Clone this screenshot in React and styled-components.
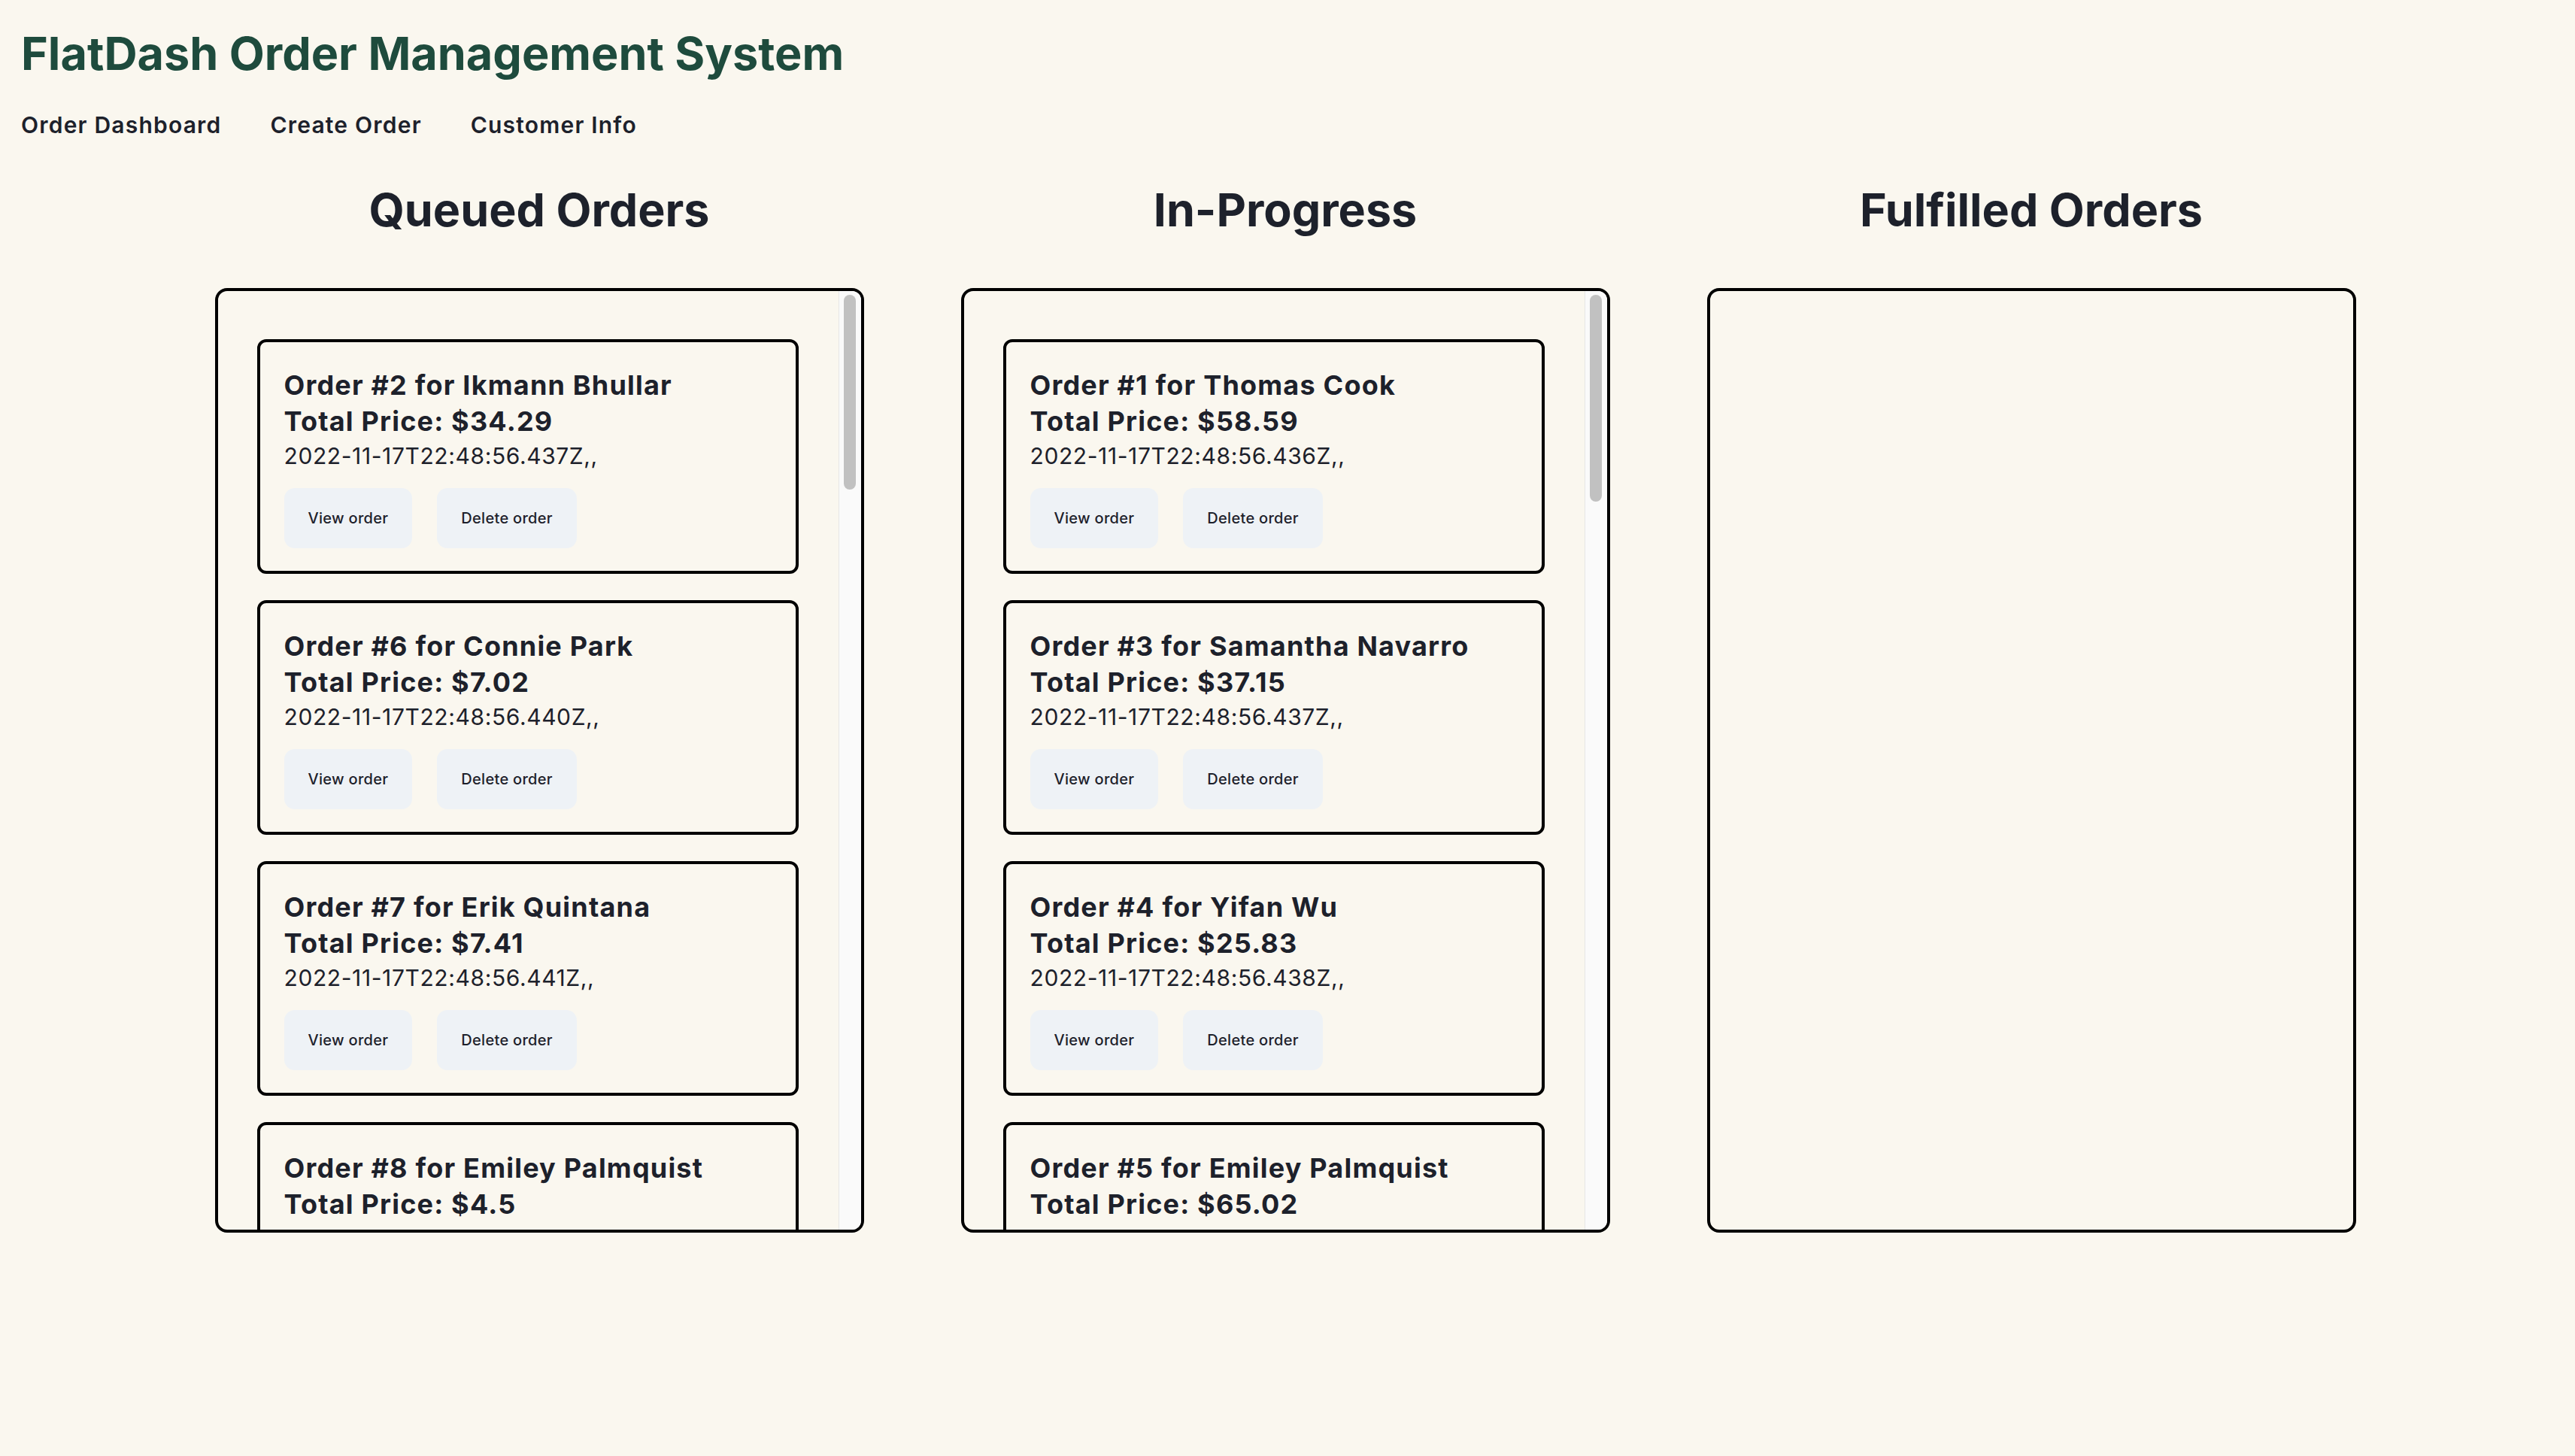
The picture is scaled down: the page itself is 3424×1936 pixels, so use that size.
import React from 'react'
import styled, { createGlobalStyle } from 'styled-components'

const GlobalStyle = createGlobalStyle`
    html, body {
        margin: 0;
        background: #faf7ef;
    }
    body {
        font-family: Inter, "Noto Sans", sans-serif;
        color: #1d212b;
    }
`

const Page = styled.div`
    padding: 34px 0 0 0;
`

const Header = styled.header`
    padding: 0 28px;
`

const Title = styled.h1`
    margin: 0;
    font-size: 61.1px;
    line-height: 74.4px;
    font-weight: 700;
    color: #1e4b3d;
`

const Nav = styled.nav`
    display: flex;
    gap: 65px;
    margin-top: 40px;
`

const NavLink = styled.a`
    font-size: 30px;
    line-height: 36px;
    font-weight: 600;
    letter-spacing: 1.2px;
    color: #1d212b;
    text-decoration: none;
    cursor: pointer;
`

const Board = styled.main`
    display: grid;
    grid-template-columns: repeat(3, 992px);
    margin: 58px 0 0 221px;
`

const Column = styled.section`
    display: flex;
    flex-direction: column;
    align-items: center;
`

const ColumnHeading = styled.h2`
    margin: 0;
    font-size: 61px;
    line-height: 74.4px;
    font-weight: 700;
    color: #1d212b;
`

const Panel = styled.div`
    box-sizing: border-box;
    width: 863px;
    height: 1256px;
    margin-top: 66px;
    border: 4px solid #000;
    border-radius: 16px;
    overflow: hidden;
    display: flex;
`

const CardList = styled.div`
    flex: 1;
    min-width: 0;
    overflow: hidden;
    display: flex;
    flex-direction: column;
    gap: 35px;
    padding: 64px 53px 35px 52px;
`

const ScrollTrack = styled.div`
    box-sizing: border-box;
    flex: none;
    width: 30px;
    background: #fafafa;
    border-left: 1px solid #e6e6e6;
    padding: 5px 6px 0 6px;
`

const ScrollThumb = styled.div`
    width: 16px;
    border-radius: 8px;
    background: #c1c1c1;
`

const Card = styled.article`
    box-sizing: border-box;
    flex: none;
    width: 720px;
    height: 312px;
    border: 4px solid #000;
    border-radius: 12px;
    padding: 33px 32px 30px;
`

const CardTitle = styled.h3`
    margin: 0;
    font-size: 36px;
    line-height: 48px;
    font-weight: 700;
    letter-spacing: 1.2px;
`

const CardDate = styled.p`
    margin: 0;
    font-size: 30px;
    line-height: 45px;
    font-weight: 400;
    letter-spacing: 0.6px;
`

const Actions = styled.div`
    display: flex;
    gap: 33px;
    margin-top: 20px;
`

const Button = styled.button`
    height: 80px;
    padding: 0 32px;
    border: none;
    border-radius: 14px;
    background: #eef2f6;
    font-family: Inter, "Noto Sans", sans-serif;
    font-size: 20px;
    font-weight: 500;
    letter-spacing: 0.3px;
    color: #1d212b;
    cursor: pointer;
`

const queued = [
    [2, 'Ikmann Bhullar', '34.29', '437'],
    [6, 'Connie Park', '7.02', '440'],
    [7, 'Erik Quintana', '7.41', '441'],
    [8, 'Emiley Palmquist', '4.5', '442'],
    [9, 'Thomas Cook', '12.8', '443'],
    [10, 'Samantha Navarro', '19.36', '444'],
    [11, 'Yifan Wu', '8.75', '445'],
    [12, 'Connie Park', '22.1', '446'],
    [13, 'Ikmann Bhullar', '15.04', '447'],
    [14, 'Erik Quintana', '31.6', '448'],
    [15, 'Emiley Palmquist', '9.99', '449'],
    [16, 'Thomas Cook', '41.27', '450'],
    [17, 'Yifan Wu', '6.5', '451'],
    [18, 'Samantha Navarro', '27.83', '452'],
    [19, 'Connie Park', '13.4', '453'],
    [20, 'Erik Quintana', '18.02', '454'],
    [21, 'Ikmann Bhullar', '5.25', '455'],
]

const inProgress = [
    [1, 'Thomas Cook', '58.59', '436'],
    [3, 'Samantha Navarro', '37.15', '437'],
    [4, 'Yifan Wu', '25.83', '438'],
    [5, 'Emiley Palmquist', '65.02', '439'],
    [22, 'Connie Park', '11.2', '456'],
    [23, 'Erik Quintana', '29.48', '457'],
    [24, 'Ikmann Bhullar', '16.7', '458'],
    [25, 'Thomas Cook', '8.05', '459'],
    [26, 'Yifan Wu', '33.9', '460'],
    [27, 'Samantha Navarro', '14.32', '461'],
    [28, 'Emiley Palmquist', '21.5', '462'],
    [29, 'Connie Park', '7.77', '463'],
    [30, 'Erik Quintana', '44.1', '464'],
    [31, 'Thomas Cook', '10.61', '465'],
    [32, 'Ikmann Bhullar', '26.4', '466'],
    [33, 'Yifan Wu', '12.09', '467'],
]

// panel inner height, card pitch and list padding, for the thumb length
const VIEW = 1248
const contentHeight = n => 64 + 35 + n * 312 + (n - 1) * 35

const OrderCard = ({ id, name, price, ms }) =>
    <Card>
        <CardTitle>Order #{id} for {name}</CardTitle>
        <CardTitle>Total Price: ${price}</CardTitle>
        <CardDate>2022-11-17T22:48:56.{ms}Z,,</CardDate>
        <Actions>
            <Button>View order</Button>
            <Button>Delete order</Button>
        </Actions>
    </Card>

const OrderColumn = ({ heading, orders }) => {
    const overflowing = orders.length > 0 && contentHeight(orders.length) > VIEW
    const thumb = overflowing
        ? Math.round((VIEW - 10) * VIEW / contentHeight(orders.length))
        : 0
    return (
        <Column>
            <ColumnHeading>{heading}</ColumnHeading>
            <Panel>
                <CardList>
                    {orders.map(([id, name, price, ms]) =>
                        <OrderCard key={id} id={id} name={name} price={price} ms={ms} />
                    )}
                </CardList>
                {overflowing &&
                    <ScrollTrack>
                        <ScrollThumb style={{ height: thumb }} />
                    </ScrollTrack>}
            </Panel>
        </Column>
    )
}

const App = () =>
    <Page>
        <GlobalStyle />
        <Header>
            <Title>FlatDash Order Management System</Title>
            <Nav>
                <NavLink>Order Dashboard</NavLink>
                <NavLink>Create Order</NavLink>
                <NavLink>Customer Info</NavLink>
            </Nav>
        </Header>
        <Board>
            <OrderColumn heading="Queued Orders" orders={queued} />
            <OrderColumn heading="In-Progress" orders={inProgress} />
            <OrderColumn heading="Fulfilled Orders" orders={[]} />
        </Board>
    </Page>

export default App
